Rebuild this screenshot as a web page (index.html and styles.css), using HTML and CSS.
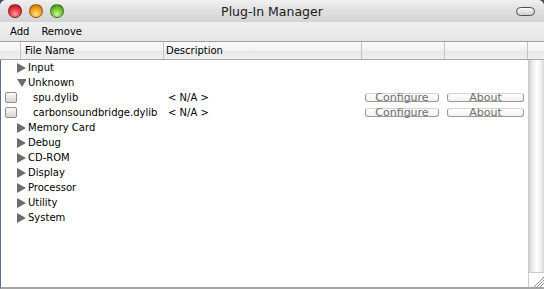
FILE: index.html
```html
<!DOCTYPE html>
<html lang="en">
<head>
  <meta charset="UTF-8" />
  <title>Plug-In Manager</title>
  <link rel="stylesheet" href="styles.css">
</head>
<body>
  <div class="window">
    <div class="titlebar">
      <div class="lights">
        <span class="light red"></span>
        <span class="light orange"></span>
        <span class="light green"></span>
      </div>
      <div class="title">Plug-In Manager</div>
      <div class="pill-wrap"><span class="pill"></span></div>
    </div>

    <div class="toolbar">
      <span>Add</span>
      <span>Remove</span>
    </div>

    <div class="header">
      <div class="hcell"></div>
      <div class="hcell name">File Name</div>
      <div class="hcell desc">Description</div>
      <div class="hcell"></div>
      <div class="hcell"></div>
      <div class="hcell last"></div>
    </div>

    <div class="list">
      <div class="rows">
        <div class="group">
          <svg class="tri" width="9" height="10" viewBox="0 0 9 10"><polygon points="0,0 9,5 0,10" /></svg>
          Input
        </div>
        <div class="group">
          <svg class="tri" width="9" height="10" viewBox="0 0 9 10"><polygon points="0,1 10,1 5,9" /></svg>
          Unknown
        </div>
        <div class="plugin">
          <span class="check"></span>
          <span class="pname">spu.dylib</span>
          <span class="pdesc">&lt; N/A &gt;</span>
          <span class="btn configure">Configure</span>
          <span class="btn about">About</span>
        </div>
        <div class="plugin">
          <span class="check"></span>
          <span class="pname">carbonsoundbridge.dylib</span>
          <span class="pdesc">&lt; N/A &gt;</span>
          <span class="btn configure">Configure</span>
          <span class="btn about">About</span>
        </div>
        <div class="group">
          <svg class="tri" width="9" height="10" viewBox="0 0 9 10"><polygon points="0,0 9,5 0,10" /></svg>
          Memory Card
        </div>
        <div class="group">
          <svg class="tri" width="9" height="10" viewBox="0 0 9 10"><polygon points="0,0 9,5 0,10" /></svg>
          Debug
        </div>
        <div class="group">
          <svg class="tri" width="9" height="10" viewBox="0 0 9 10"><polygon points="0,0 9,5 0,10" /></svg>
          CD-ROM
        </div>
        <div class="group">
          <svg class="tri" width="9" height="10" viewBox="0 0 9 10"><polygon points="0,0 9,5 0,10" /></svg>
          Display
        </div>
        <div class="group">
          <svg class="tri" width="9" height="10" viewBox="0 0 9 10"><polygon points="0,0 9,5 0,10" /></svg>
          Processor
        </div>
        <div class="group">
          <svg class="tri" width="9" height="10" viewBox="0 0 9 10"><polygon points="0,0 9,5 0,10" /></svg>
          Utility
        </div>
        <div class="group">
          <svg class="tri" width="9" height="10" viewBox="0 0 9 10"><polygon points="0,0 9,5 0,10" /></svg>
          System
        </div>
      </div>

      <div class="scroller">
        <div class="track"></div>
        <div class="grip">
          <svg width="15" height="14" viewBox="0 0 15 14">
            <line x1="5" y1="14" x2="15" y2="4" />
            <line x1="8" y1="14" x2="15" y2="7" />
            <line x1="11" y1="14" x2="15" y2="10" />
          </svg>
        </div>
      </div>
    </div>
  </div>
</body>
</html>
```

FILE: styles.css
```css
html, body {
  margin: 0;
  padding: 0;
}
body {
  background-color: #2f4a74;
  font-family: "DejaVu Sans", "Lucida Grande", sans-serif;
  font-size: 10px;
  color: #000;
  width: 544px;
  height: 289px;
  overflow: hidden;
}
.window {
  display: flex;
  flex-direction: column;
  height: 289px;
  border-radius: 6px 6px 0 0;
  overflow: hidden;
  background-color: #e8e8e8;
}

/* title bar */
.titlebar {
  height: 22px;
  display: grid;
  grid-template-columns: 1fr auto 1fr;
  align-items: center;
  background: linear-gradient(#f0f0f0, #e2e2e2 40%, #d3d3d3);
}
.lights {
  display: flex;
  gap: 7px;
  padding-left: 8px;
}
.light {
  width: 14px;
  height: 14px;
  border-radius: 50%;
  box-sizing: border-box;
  border: 1px solid rgba(0, 0, 0, 0.35);
}
.red {
  background: radial-gradient(circle at 50% 75%, #ff9a9a, #e0333a 55%, #a8101a);
}
.orange {
  background: radial-gradient(circle at 50% 75%, #ffe08a, #f09a18 55%, #b56200);
}
.green {
  background: radial-gradient(circle at 50% 75%, #cdf59a, #6cbf2a 55%, #3a7d0c);
}
.title {
  font-size: 12.5px;
  color: #1a1a1a;
  padding-top: 1px;
}
.pill-wrap {
  display: flex;
  justify-content: flex-end;
  padding-right: 9px;
}
.pill {
  width: 19px;
  height: 9px;
  box-sizing: border-box;
  border: 1px solid #4e4e4e;
  border-radius: 5px;
  background: linear-gradient(#fafafa, #cfcfcf);
}

/* toolbar */
.toolbar {
  height: 19px;
  display: flex;
  align-items: center;
  gap: 12px;
  padding-left: 10px;
  background: linear-gradient(#efefef, #e6e6e6);
  border-bottom: 1px solid #9c9c9c;
}

/* column header */
.header {
  display: flex;
  height: 18px;
  box-sizing: border-box;
  border-bottom: 1px solid #a6a6a6;
  background: linear-gradient(#fdfdfd, #f2f2f2 50%, #e6e6e6 51%, #f0f0f0);
}
.hcell {
  box-sizing: border-box;
  border-right: 1px solid #c3c3c3;
  line-height: 17px;
  white-space: nowrap;
}
.hcell:nth-child(1) { width: 21px; }
.hcell.name { width: 143px; padding-left: 4px; }
.hcell.desc { width: 198px; padding-left: 2px; }
.hcell:nth-child(4) { width: 83px; }
.hcell:nth-child(5) { width: 83px; }
.hcell.last { flex: 1; border-right: none; }

/* list */
.list {
  flex: 1;
  display: flex;
  background-color: #fff;
  border-left: 1px solid #5a6c8c;
  border-bottom: 2px solid #a4a4a4;
}
.rows {
  width: 527px;
}
.group {
  height: 15px;
  display: flex;
  align-items: center;
  gap: 2px;
  padding-left: 16px;
}
.tri {
  fill: #6c6c6c;
  flex: none;
}
.plugin {
  height: 15px;
  display: grid;
  grid-template-columns: 20px 143px 198px 83px 83px;
  align-items: center;
}
.check {
  width: 12px;
  height: 11px;
  margin-left: 4px;
  box-sizing: border-box;
  border: 1px solid #8e8e8e;
  border-radius: 2px;
  background: linear-gradient(#fbfbfb, #e4e4e4 60%, #d6d6d6);
}
.pname {
  padding-left: 12px;
  white-space: nowrap;
}
.pdesc {
  padding-left: 4px;
}
.btn {
  height: 9px;
  box-sizing: border-box;
  border: 1px solid #9a9a9a;
  border-top-color: #d4d4d4;
  border-radius: 3px;
  background: linear-gradient(#ffffff, #f1f1f1);
  color: #6e6e6e;
  font-size: 11px;
  line-height: 8px;
  text-align: center;
  overflow: visible;
}
.configure {
  width: 74px;
  margin-left: 3px;
}
.about {
  width: 77px;
  margin-left: 2px;
}

/* scroll bar */
.scroller {
  flex: 1;
  display: flex;
  flex-direction: column;
}
.track {
  flex: 1;
  border-left: 1px solid #c9c9c9;
  background: linear-gradient(to right, #d2d2d2, #eeeeee 25%, #ffffff 50%, #f3f3f3 75%, #dadada);
}
.grip {
  height: 14px;
  border-top: 1px solid #c9c9c9;
  border-left: 1px solid #c9c9c9;
  background-color: #fff;
}
.grip svg {
  display: block;
  stroke: #8c8c8c;
  stroke-width: 1;
}
```
